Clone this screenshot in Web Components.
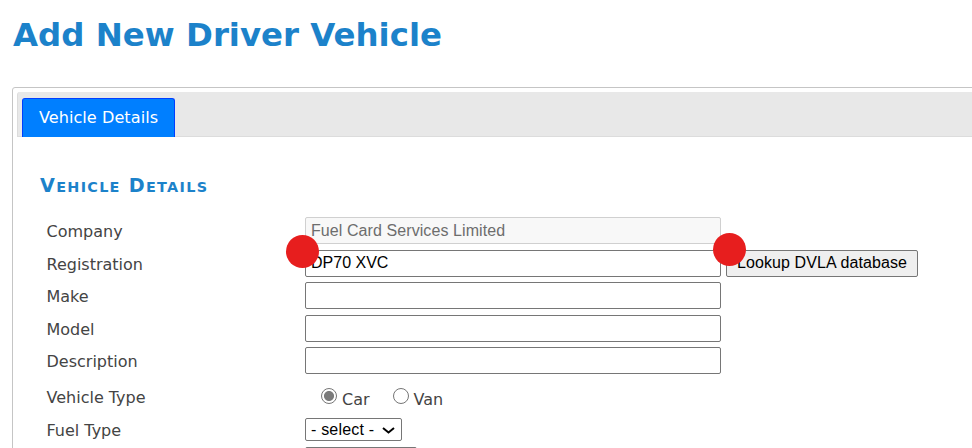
<!DOCTYPE html>
<html lang="en">
<head>
<meta charset="utf-8">
<title>Add New Driver Vehicle</title>
<style>
html, body { margin: 0; padding: 0; height: 448px; overflow: hidden; background: #fff; }
body { position: relative; font-family: "DejaVu Sans", Verdana, sans-serif; color: #444; }
</style>
</head>
<body>
<driver-page>
  <tab-panel label="Vehicle Details">
    <section-heading>V<i>ehicle</i> D<i>etails</i></section-heading>
    <form-row label="Company"><text-field value="Fuel Card Services Limited" disabled></text-field></form-row>
    <form-row label="Registration"><text-field value="DP70 XVC"></text-field><lookup-button>Lookup DVLA database</lookup-button></form-row>
    <form-row label="Make"><text-field></text-field></form-row>
    <form-row label="Model"><text-field></text-field></form-row>
    <form-row label="Description"><text-field></text-field></form-row>
    <form-row label="Vehicle Type" class="radios"><radio-pick label="Car" checked></radio-pick><radio-pick label="Van"></radio-pick></form-row>
    <form-row label="Fuel Type" class="fuel"><select-field option="- select -"></select-field></form-row>
    <form-row class="last"><select-field option="" wide></select-field></form-row>
  </tab-panel>
</driver-page>
<red-marker style="left:285.7px;top:235px"></red-marker>
<red-marker style="left:712.7px;top:233px"></red-marker>

<script>
function shadow(el, html) {
  el.attachShadow({ mode: 'open' }).innerHTML = html;
  return el.shadowRoot;
}

class DriverPage extends HTMLElement {
  constructor() {
    super();
    shadow(this, `
      <style>
        :host { display: block; padding: 14px 0 0 12px; width: 1300px; }
        h1 { margin: 0 0 31px 1px; font: bold 32.4px/42px "DejaVu Sans", Verdana, sans-serif; color: #1c82ca; }
      </style>
      <h1>Add New Driver Vehicle</h1>
      <slot></slot>`);
  }
}

class TabPanel extends HTMLElement {
  constructor() {
    super();
    shadow(this, `
      <style>
        :host { display: block; border: 1px solid #c5c5c5; border-radius: 3px; padding: 4px; background: #fff; }
        .bar { display: flex; height: 44px; padding: 0 0 0 4px; align-items: flex-end; background: #e8e8e8;
               border: 1px solid #dcdcdc; border-radius: 3px 3px 0 0; border-width: 0 0 1px 1px; }
        .tab { box-sizing: border-box; width: 153px; height: 39px; margin-bottom: -1px; line-height: 38px; text-align: center;
               background: #007fff; color: #fff; border: 1px solid #003eff; border-bottom: 0; border-radius: 3px 3px 0 0;
               font-size: 16.1px; letter-spacing: 0.05px; }
        .body { padding: 35px 0 0 23px; }
      </style>
      <div class="bar"><div class="tab"></div></div>
      <div class="body"><slot></slot></div>`);
    this.shadowRoot.querySelector('.tab').textContent = this.getAttribute('label');
  }
}

class SectionHeading extends HTMLElement {
  constructor() {
    super();
    shadow(this, `
      <style>
        :host { display: block; height: 42.25px; font: bold 19.2px/27px "DejaVu Sans", Verdana, sans-serif;
                color: #1c82ca; letter-spacing: 1.3px; text-transform: uppercase; }
        ::slotted(i) { font-style: normal; font-size: 14.4px; }
      </style>
      <slot></slot>`);
  }
}

class FormRow extends HTMLElement {
  constructor() {
    super();
    shadow(this, `
      <style>
        :host { display: grid; grid-template-columns: 258.5px auto; align-items: center; height: 32.5px; padding-left: 6.5px; }
        :host(.radios) { height: 40.5px; }
        :host(.fuel) { height: 23px; margin-top: 0.75px; margin-bottom: 5.5px; }
        :host(.last) { height: 24px; }
        .label { font-size: 16px; color: #444; padding-top: 2px; }
        :host(.radios) .label { padding-top: 0; }
        .ctl { display: flex; align-items: center; }
        :host(.radios) .ctl { padding-left: 16px; }
      </style>
      <div class="label"></div>
      <div class="ctl"><slot></slot></div>`);
    this.shadowRoot.querySelector('.label').textContent = this.getAttribute('label') || '';
  }
}

class TextField extends HTMLElement {
  constructor() {
    super();
    shadow(this, `
      <style>
        :host { display: block; }
        input { display: block; box-sizing: border-box; width: 416px; height: 27px; margin: 0; padding: 0 5px;
                font: 16px "Liberation Sans", Arial, sans-serif; color: #000; background: #fff;
                border: 1px solid #767676; border-radius: 2px; outline: 0; }
        input:disabled { background: #f8f8f8; border-color: #d0d0d0; color: #6d6d6d; letter-spacing: 0.08px; }
      </style>
      <input type="text">`);
    const input = this.shadowRoot.querySelector('input');
    input.value = this.getAttribute('value') || '';
    input.disabled = this.hasAttribute('disabled');
  }
}

class LookupButton extends HTMLElement {
  constructor() {
    super();
    shadow(this, `
      <style>
        :host { display: block; margin-left: 5px; }
        button { display: block; box-sizing: border-box; width: 192px; height: 27px; padding: 0; margin: 0;
                 font: 16px "Liberation Sans", Arial, sans-serif; letter-spacing: 0.1px; color: #000; background: #efefef;
                 border: 1px solid #767676; border-radius: 2px; }
      </style>
      <button><slot></slot></button>`);
  }
}

class RadioPick extends HTMLElement {
  constructor() {
    super();
    shadow(this, `
      <style>
        :host { display: flex; align-items: center; margin-right: 23px; font-size: 16px; color: #444; }
        input { appearance: none; box-sizing: border-box; width: 16px; height: 16px; margin: 0 5px 0 0; position: relative; top: -1px;
                border: 1px solid #767676; border-radius: 50%; background: #fff; }
        input:checked { background: radial-gradient(circle, #7b7b7b 0 4.6px, #fff 5.4px); }
        span { position: relative; top: 2px; }
      </style>
      <input type="radio"><span></span>`);
    this.shadowRoot.querySelector('input').checked = this.hasAttribute('checked');
    this.shadowRoot.querySelector('span').textContent = this.getAttribute('label');
  }
}

class SelectField extends HTMLElement {
  constructor() {
    super();
    shadow(this, `
      <style>
        :host { display: block; position: relative; }
        select { display: block; box-sizing: border-box; appearance: none; height: 23px; margin: 0; padding: 0 0 0 5px; width: 97px;
                 font: 16px "Liberation Sans", Arial, sans-serif; letter-spacing: 0.2px; color: #000; background: #fff;
                 border: 1px solid #767676; border-radius: 2px; }
        select.wide { width: 112px; }
        svg { position: absolute; top: 9px; right: 7px; pointer-events: none; }
      </style>
      <select><option></option></select>
      <svg width="13" height="7" viewBox="0 0 13 7"><path d="M1 1l5.5 4.5L12 1" fill="none" stroke="#000" stroke-width="2"/></svg>`);
    const select = this.shadowRoot.querySelector('select');
    select.options[0].textContent = this.getAttribute('option');
    if (this.hasAttribute('wide')) select.className = 'wide';
  }
}

class RedMarker extends HTMLElement {
  constructor() {
    super();
    shadow(this, `
      <style>
        :host { display: block; position: absolute; width: 33px; height: 33px; border-radius: 50%; background: #e71e1e; }
      </style>`);
  }
}

customElements.define('driver-page', DriverPage);
customElements.define('tab-panel', TabPanel);
customElements.define('section-heading', SectionHeading);
customElements.define('form-row', FormRow);
customElements.define('text-field', TextField);
customElements.define('lookup-button', LookupButton);
customElements.define('radio-pick', RadioPick);
customElements.define('select-field', SelectField);
customElements.define('red-marker', RedMarker);
</script>
</body>
</html>
